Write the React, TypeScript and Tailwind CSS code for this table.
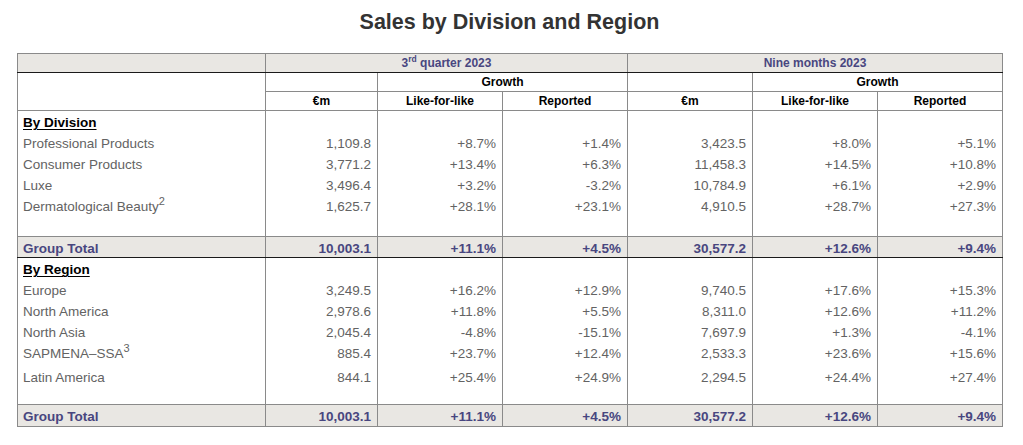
import React from "react";

const F = { fontFamily: '"Liberation Sans", Arial, sans-serif' };

type Row = [string, string, string, string, string, string, string, string?];

const division: Row[] = [
  ["Professional Products", "1,109.8", "+8.7%", "+1.4%", "3,423.5", "+8.0%", "+5.1%"],
  ["Consumer Products", "3,771.2", "+13.4%", "+6.3%", "11,458.3", "+14.5%", "+10.8%"],
  ["Luxe", "3,496.4", "+3.2%", "-3.2%", "10,784.9", "+6.1%", "+2.9%"],
  ["Dermatological Beauty", "1,625.7", "+28.1%", "+23.1%", "4,910.5", "+28.7%", "+27.3%", "2"],
];

const region: Row[] = [
  ["Europe", "3,249.5", "+16.2%", "+12.9%", "9,740.5", "+17.6%", "+15.3%"],
  ["North America", "2,978.6", "+11.8%", "+5.5%", "8,311.0", "+12.6%", "+11.2%"],
  ["North Asia", "2,045.4", "-4.8%", "-15.1%", "7,697.9", "+1.3%", "-4.1%"],
  ["SAPMENA–SSA", "885.4", "+23.7%", "+12.4%", "2,533.3", "+23.6%", "+15.6%", "3"],
  ["Latin America", "844.1", "+25.4%", "+24.9%", "2,294.5", "+24.4%", "+27.4%"],
];

const total = ["10,003.1", "+11.1%", "+4.5%", "30,577.2", "+12.6%", "+9.4%"];

const vb = "border-l border-r border-[#8a8a8a]";

function DataRow({ r, tall }: { r: Row; tall?: boolean }) {
  const pt = tall ? "pt-[6px]" : "pt-[3px]";
  return (
    <tr className={`${tall ? "h-[24px]" : "h-[21px]"} text-[13.5px] leading-[17px] text-[#636363]`}>
      <td className={`${vb} pl-[5px] ${pt} whitespace-nowrap`}>
        {r[0]}
        {r[7] && <sup className="text-[11px] relative -top-[6px]">{r[7]}</sup>}
      </td>
      {r.slice(1, 7).map((v, i) => (
        <td key={i} className={`${vb} text-right pr-[6px] ${pt}`}>
          {v}
        </td>
      ))}
    </tr>
  );
}

function SectionHead({ label }: { label: string }) {
  return (
    <tr className="h-[21px] text-[13.5px] leading-[17px]">
      <td className={`${vb} pl-[5px] pt-[3px] font-bold text-black underline underline-offset-[2px]`}>{label}</td>
      {[0, 1, 2, 3, 4, 5].map((i) => (
        <td key={i} className={vb}></td>
      ))}
    </tr>
  );
}

function Blank({ short }: { short?: boolean }) {
  return (
    <tr className={short ? "h-[18px]" : "h-[21px]"}>
      {[0, 1, 2, 3, 4, 5, 6].map((i) => (
        <td key={i} className={vb}></td>
      ))}
    </tr>
  );
}

function Total({ dark }: { dark: boolean }) {
  const bb = dark ? "border-b-[1.5px] border-b-[#1a1a1a]" : "border-b border-b-[#8a8a8a]";
  return (
    <tr className={`${dark ? "h-[21px]" : "h-[22px]"} text-[13.5px] leading-[17px] font-bold text-[#48467f] bg-[#e9e7e3]`}>
      <td className={`${vb} border-t border-t-[#8a8a8a] ${bb} pl-[5px] pt-[2px]`}>Group Total</td>
      {total.map((v, i) => (
        <td key={i} className={`${vb} border-t border-t-[#8a8a8a] ${bb} text-right pr-[6px] pt-[2px]`}>
          {v}
        </td>
      ))}
    </tr>
  );
}

export default function App() {
  const hc = "border border-[#8a8a8a] text-center";
  return (
    <div className="w-[1023px] h-[445px] bg-white" style={F}>
      <div className="ml-[17px] w-[985px] pt-[9px]">
        <h1 className="text-center text-[21.5px] font-bold text-[#333333] leading-[26px] h-[44px]">
          Sales by Division and Region
        </h1>
        <table className="table-fixed border-collapse w-[985px]">
          <colgroup>
            <col className="w-[248px]" />
            <col className="w-[112px]" />
            <col className="w-[125px]" />
            <col className="w-[125px]" />
            <col className="w-[125px]" />
            <col className="w-[125px]" />
            <col className="w-[125px]" />
          </colgroup>
          <tbody>
            <tr className="h-[19px] bg-[#e9e7e3] text-[12px] leading-[15px] font-bold text-[#48467f]">
              <td className="border border-[#8a8a8a] border-b-[1.5px] border-b-[#1a1a1a]"></td>
              <td colSpan={3} className={`${hc} border-b-[1.5px] border-b-[#1a1a1a]`}>
                3<sup className="text-[8.5px] relative -top-[5px]">rd</sup> quarter 2023
              </td>
              <td colSpan={3} className={`${hc} border-b-[1.5px] border-b-[#1a1a1a]`}>
                Nine months 2023
              </td>
            </tr>
            <tr className="h-[19px] text-[12px] leading-[15px] font-bold text-black">
              <td rowSpan={2} className="border border-[#8a8a8a]"></td>
              <td className={hc}></td>
              <td colSpan={2} className={hc}>Growth</td>
              <td className={hc}></td>
              <td colSpan={2} className={hc}>Growth</td>
            </tr>
            <tr className="h-[19px] text-[12px] leading-[15px] font-bold text-black">
              <td className={hc}>€m</td>
              <td className={hc}>Like-for-like</td>
              <td className={hc}>Reported</td>
              <td className={hc}>€m</td>
              <td className={hc}>Like-for-like</td>
              <td className={hc}>Reported</td>
            </tr>
            <SectionHead label="By Division" />
            {division.map((r) => (
              <DataRow key={r[0]} r={r} />
            ))}
            <Blank />
            <Total dark={true} />
            <SectionHead label="By Region" />
            {region.map((r) => (
              <DataRow key={r[0]} r={r} tall={r[0] === "Latin America"} />
            ))}
            <Blank short />
            <Total dark={false} />
          </tbody>
        </table>
      </div>
    </div>
  );
}
